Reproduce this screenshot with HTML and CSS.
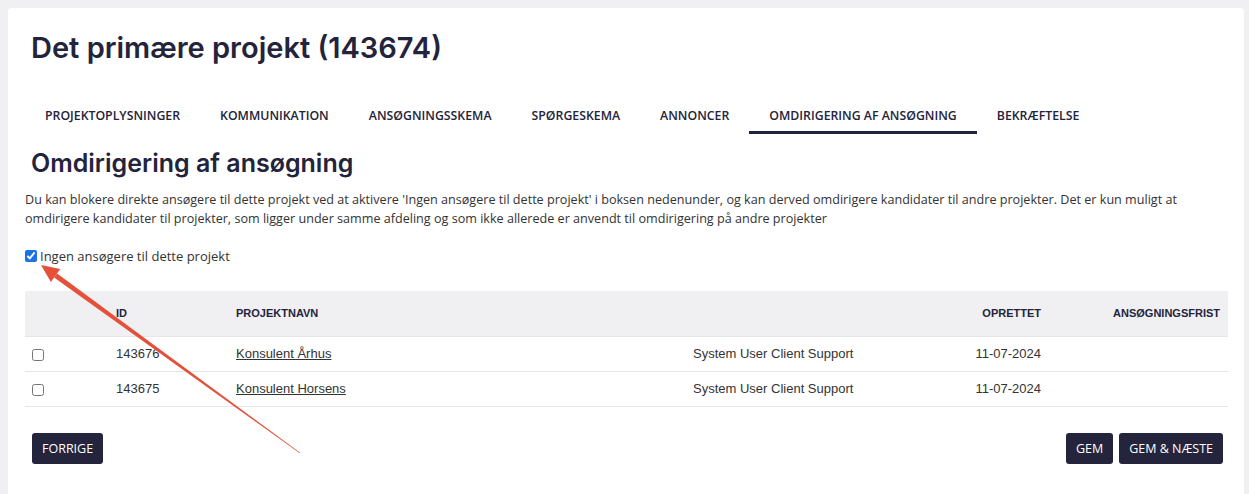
FILE: index.html
```html
<!DOCTYPE html>
<html lang="da">

<head>
  <meta charset="UTF-8">
  <meta name="viewport" content="width=device-width, initial-scale=1.0">
  <title>Omdirigering af ansøgning</title>
  <link rel="stylesheet" href="styles.css">
</head>

<body>
  <div class="card">
    <h1 class="page-title">Det primære projekt (143674)</h1>

    <!-- faner -->
    <ul class="tabs">
      <li>Projektoplysninger</li>
      <li>Kommunikation</li>
      <li>Ansøgningsskema</li>
      <li>Spørgeskema</li>
      <li>Annoncer</li>
      <li class="active">Omdirigering af ansøgning</li>
      <li>Bekræftelse</li>
    </ul>

    <h2 class="section-title">Omdirigering af ansøgning</h2>
    <p class="intro">Du kan blokere direkte ansøgere til dette projekt ved at aktivere 'Ingen ansøgere til dette projekt' i boksen nedenunder, og kan derved omdirigere kandidater til andre projekter. Det er kun muligt at omdirigere kandidater til projekter, som ligger under samme afdeling og som ikke allerede er anvendt til omdirigering på andre projekter</p>

    <label class="block-check">
      <input type="checkbox" checked>
      <span>Ingen ansøgere til dette projekt</span>
    </label>

    <table class="projects">
      <colgroup>
        <col style="width:83px">
        <col style="width:120px">
        <col style="width:457px">
        <col style="width:214px">
        <col style="width:150px">
        <col style="width:179px">
      </colgroup>
      <thead>
        <tr>
          <th></th>
          <th>ID</th>
          <th>Projektnavn</th>
          <th></th>
          <th class="right">Oprettet</th>
          <th class="right">Ansøgningsfrist</th>
        </tr>
      </thead>
      <tbody>
        <tr>
          <td><input type="checkbox"></td>
          <td>143676</td>
          <td><a href="#">Konsulent Århus</a></td>
          <td>System User Client Support</td>
          <td class="right">11-07-2024</td>
          <td></td>
        </tr>
        <tr>
          <td><input type="checkbox"></td>
          <td>143675</td>
          <td><a href="#">Konsulent Horsens</a></td>
          <td>System User Client Support</td>
          <td class="right">11-07-2024</td>
          <td></td>
        </tr>
      </tbody>
    </table>

    <div class="actions">
      <button class="btn">Forrige</button>
      <div class="actions-right">
        <button class="btn">Gem</button>
        <button class="btn">Gem &amp; næste</button>
      </div>
    </div>
  </div>

  <!-- rød pil (annotation) -->
  <svg class="arrow" width="1249" height="494" viewBox="0 0 1249 494">
    <polygon fill="#e5503a" points="57.1,273.6 54.1,277.6 299.8,453.3 300.2,452.7" />
    <polygon fill="#e5503a" points="41,265 60.3,269.1 50.9,282.1" />
  </svg>
</body>

</html>
```

FILE: styles.css
```css
* {
  margin: 0;
  padding: 0;
  box-sizing: border-box;
}

body {
  background-color: #f0f0f2;
  font-family: "Open Sans", "Liberation Sans", sans-serif;
  color: #333;
}

/* hvid boks */
.card {
  margin: 8px 5px 0 8px;
  height: 486px;
  background-color: #fff;
  border-radius: 4px 4px 0 0;
  padding: 0 16px 0 17px;
}

.page-title {
  font-family: Inter, "Noto Sans", sans-serif;
  font-weight: 600;
  font-size: 29px;
  color: #23233b;
  padding: 22px 0 0 6px;
  height: 88px;
}

/* faner */
.tabs {
  list-style: none;
  display: flex;
}

.tabs li {
  padding: 11px 20px 7px;
  font-size: 12.3px;
  font-weight: 600;
  text-transform: uppercase;
  color: #23233b;
  border-bottom: 3px solid transparent;
}

.tabs li.active {
  border-bottom-color: #23233b;
}

.section-title {
  font-family: Inter, "Noto Sans", sans-serif;
  font-weight: 600;
  font-size: 25px;
  color: #23233b;
  padding: 14px 0 0 6px;
  height: 56px;
}

.intro {
  font-size: 12.6px;
  line-height: 19px;
  color: #333;
}

.block-check {
  display: flex;
  align-items: center;
  gap: 3px;
  margin-top: 19px;
  font-size: 13px;
  color: #333;
}

.block-check input {
  width: 12px;
  height: 12px;
  margin: 0;
  accent-color: #1a73e8;
}

/* projekttabel */
.projects {
  width: 1203px;
  margin-top: 26px;
  table-layout: fixed;
  border-collapse: collapse;
  font-family: "Liberation Sans", Arial, sans-serif;
  font-size: 13px;
}

.projects th {
  background-color: #f0f0f3;
  height: 45px;
  padding: 0 8px;
  text-align: left;
  font-size: 11px;
  font-weight: 700;
  text-transform: uppercase;
  color: #23233b;
  border-bottom: 1px solid #e6e6e8;
}

.projects td {
  height: 35px;
  padding: 0 8px;
  color: #333;
  border-bottom: 1px solid #e6e6e8;
}

.projects td:first-child {
  padding-left: 7px;
}

.projects td input {
  width: 12px;
  height: 12px;
  margin: 0;
  vertical-align: middle;
}

.projects .right {
  text-align: right;
}

.projects a {
  color: #333;
  text-decoration: underline;
}

/* knapper */
.actions {
  display: flex;
  justify-content: space-between;
  padding: 26px 5px 0 7px;
}

.actions-right {
  display: flex;
  gap: 6px;
}

.btn {
  height: 31px;
  padding: 0 10px;
  border: 0;
  border-radius: 3px;
  background-color: #24243c;
  color: #fff;
  font-family: "Open Sans", sans-serif;
  font-size: 12.5px;
  font-weight: 500;
  text-transform: uppercase;
}

.arrow {
  position: absolute;
  top: 0;
  left: 0;
  pointer-events: none;
}
```
